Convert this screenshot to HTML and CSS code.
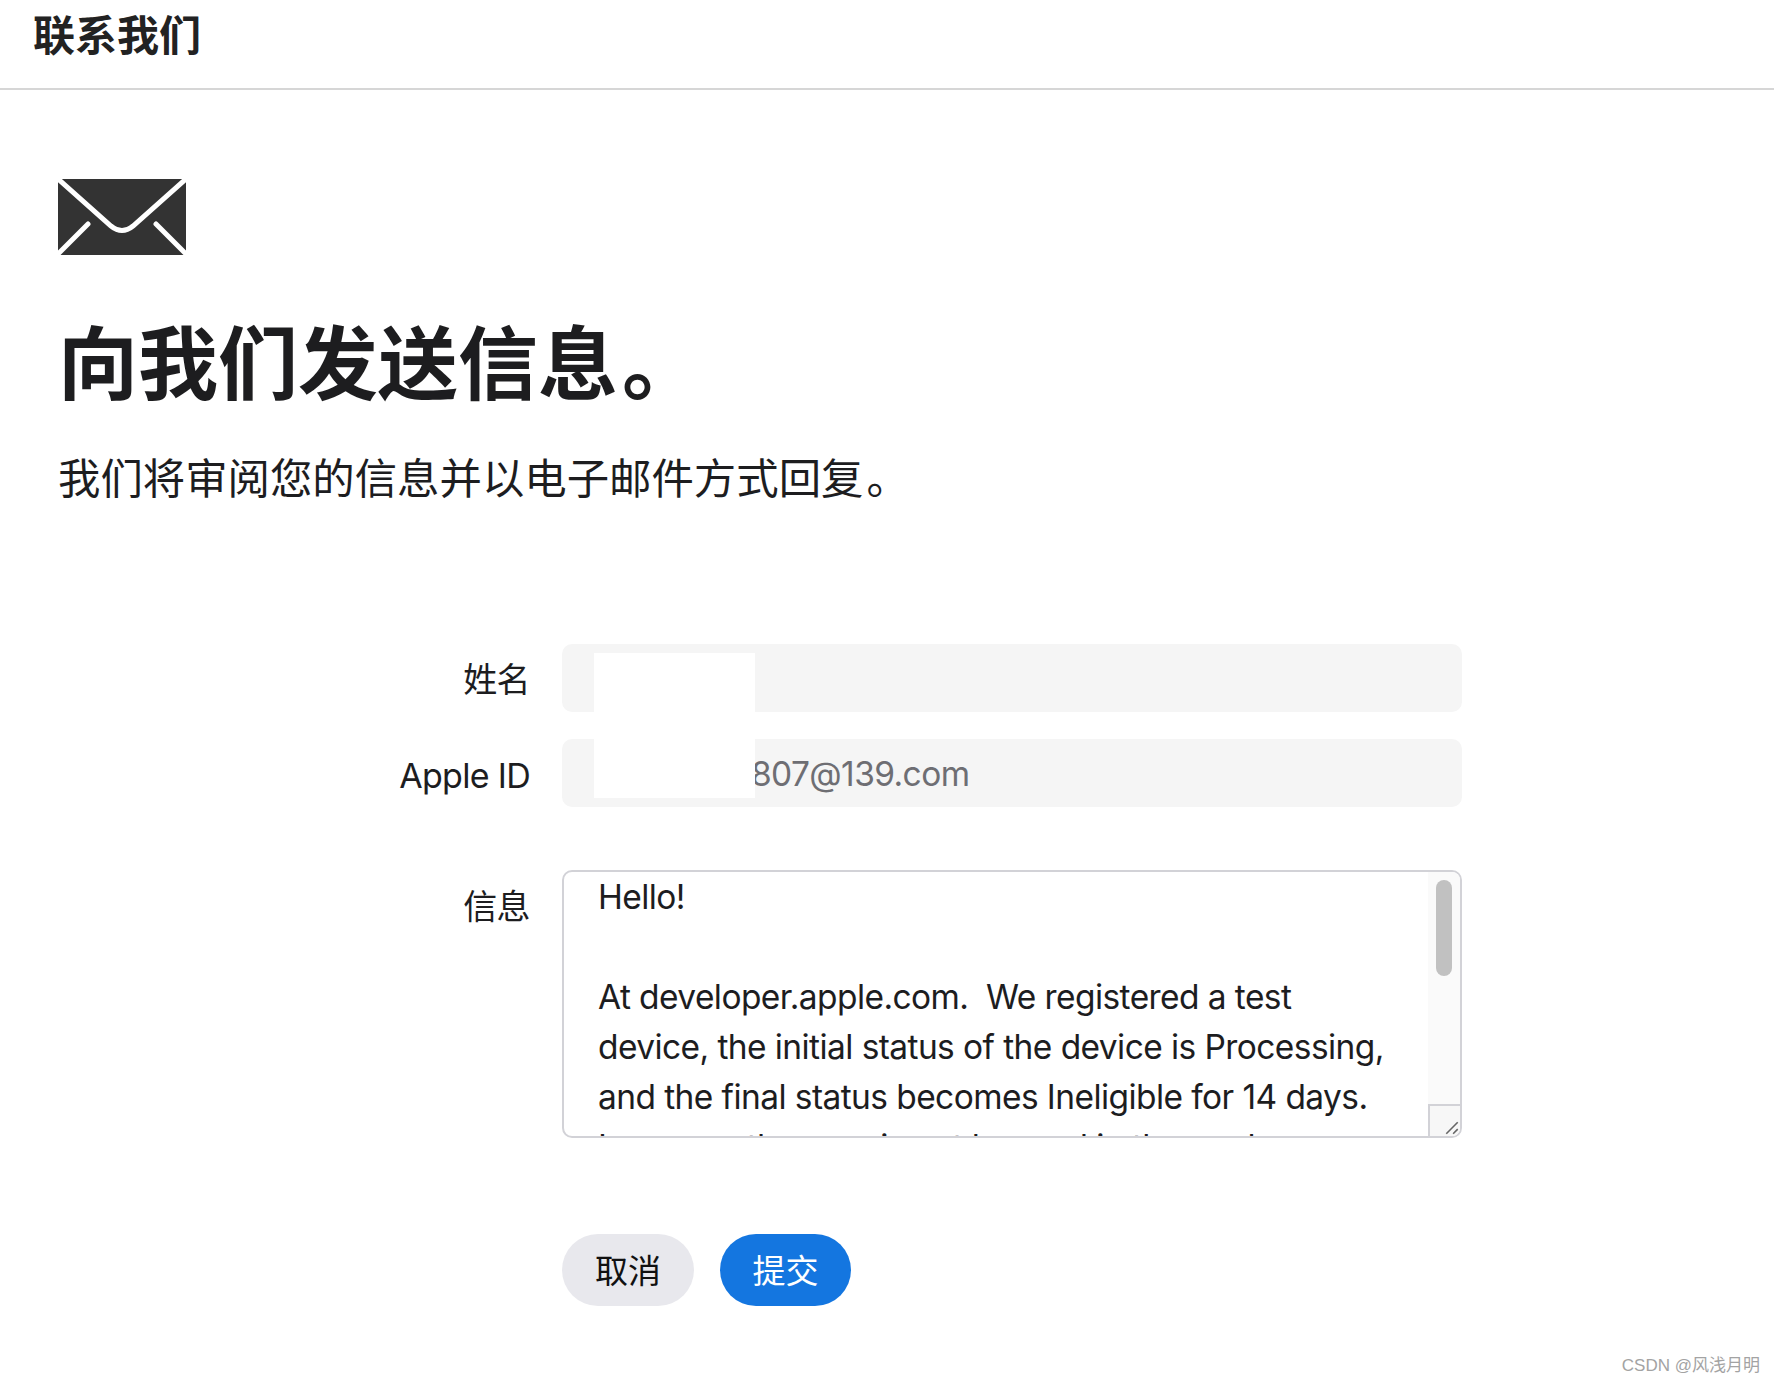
FILE: index.html
```html
<!DOCTYPE html>
<html lang="zh-CN">

<head>
  <meta charset="UTF-8">
  <meta name="viewport" content="width=device-width, initial-scale=1.0">
  <title>联系我们</title>
  <link rel="stylesheet" href="styles.css">
</head>

<body>
  <header class="topbar">
    <span class="topbar-title">联系我们</span>
  </header>

  <main class="content">
    <svg class="mail-icon" viewBox="0 0 128 76" aria-hidden="true">
      <path fill="#333" d="M0 0H128V76H0Z" />
      <path fill="none" stroke="#fff" stroke-width="5" stroke-linecap="round"
        d="M-1 -1L53 47Q64 56 75 47L129 -1M-1 76L30 45M129 76L98 45" />
    </svg>
    <h1 class="headline">向我们发送信息<span class="stop">。</span></h1>
    <p class="intro">我们将审阅您的信息并以电子邮件方式回复<span class="stop-small">。</span></p>

    <form class="form">
      <label class="label">姓名</label>
      <div class="field"></div>
      <label class="label label-id">Apple ID</label>
      <div class="field field-id">807@139.com</div>
      <div class="mask"></div>

      <label class="label label-msg">信息</label>
      <div class="message">
        <div class="message-text">Hello!<br><br>At developer.apple.com.&nbsp; We registered a test<br>device, the initial status of the device is Processing,<br>and the final status becomes Ineligible for 14 days.<br>I am sure the user is not banned in the apple</div>
        <div class="scroll-track"><div class="scroll-thumb"></div></div>
        <div class="resizer">
          <svg viewBox="0 0 14 14" aria-hidden="true">
            <path fill="none" stroke="#666" stroke-width="1.4" d="M2 12L12 2M8 12L12 8" />
          </svg>
        </div>
      </div>

      <div class="buttons">
        <button type="button" class="btn btn-cancel">取消</button>
        <button type="button" class="btn btn-submit">提交</button>
      </div>
    </form>
  </main>

  <div class="watermark">CSDN @风浅月明</div>
</body>

</html>
```

FILE: styles.css
```css
body {
  margin: 0;
  background: #fff;
  color: #1d1d1f;
  font-family: Inter, "Noto Sans CJK SC", sans-serif;
}

.topbar {
  height: 88px;
  padding-left: 33px;
  border-bottom: 2px solid #d6d6d6;
  display: flex;
  align-items: center;
}

.topbar-title {
  font-size: 42px;
  font-weight: 700;
  line-height: 72px;
  color: #222;
  position: relative;
  top: -8px;
}

.content {
  padding: 89px 0 0 58px;
}

.mail-icon {
  display: block;
  width: 128px;
  height: 76px;
}

.headline {
  margin: 53px 0 0;
  font-size: 80px;
  line-height: 112px;
  font-weight: 700;
}

.stop {
  margin-left: 4px;
}

.intro {
  margin: 29px 0 0;
  font-size: 42.4px;
  line-height: 60px;
}

.stop-small {
  margin-left: 3px;
}

.form {
  margin: 135px 0 0 -58px;
  display: grid;
  grid-template-columns: 530px 900px;
  column-gap: 32px;
  position: relative;
}

.label {
  padding-top: 2px;
  text-align: right;
  font-size: 34px;
  letter-spacing: -0.6px;
  line-height: 67px;
}

.label-id {
  padding-top: 3px;
  letter-spacing: -0.7px;
}

.field {
  height: 68px;
  margin-bottom: 27px;
  padding-left: 189px;
  border-radius: 10px;
  background: #f5f5f5;
  color: #6e6e73;
  font-size: 33.5px;
  letter-spacing: -0.6px;
  line-height: 71px;
}

.field-id {
  margin-bottom: 0;
}

.mask {
  position: absolute;
  left: 594px;
  top: 9px;
  width: 161px;
  height: 145px;
  background: #fff;
}

.label-msg {
  margin-top: 62px;
}

.message {
  margin-top: 61px;
  height: 264px;
  border: 2px solid #d2d2d7;
  border-radius: 10px;
  position: relative;
  overflow: hidden;
}

.message-text {
  padding: 0 34px;
  font-size: 33.5px;
  letter-spacing: -0.58px;
  line-height: 50px;
  white-space: nowrap;
}

.scroll-track {
  position: absolute;
  top: 0;
  right: 0;
  bottom: 0;
  width: 32px;
  background: #fafafa;
}

.scroll-thumb {
  position: absolute;
  top: 8px;
  right: 8px;
  width: 16px;
  height: 96px;
  border-radius: 8px;
  background: #c1c1c1;
}

.resizer {
  position: absolute;
  right: 0;
  bottom: 0;
  width: 30px;
  height: 30px;
  border: solid #d2d2d7;
  border-width: 2px 0 0 2px;
  background: #f7f7f7;
}

.resizer svg {
  position: absolute;
  right: 0;
  bottom: 0;
  width: 16px;
  height: 16px;
}

.buttons {
  grid-column: 2;
  margin-top: 96px;
  display: flex;
  gap: 26px;
}

.btn {
  width: 132px;
  height: 72px;
  padding: 0 0 3px;
  border: 0;
  border-radius: 36px;
  font-family: inherit;
  font-size: 33px;
}

.btn-cancel {
  background: #e8e8ed;
  color: #111;
}

.btn-submit {
  width: 131px;
  background: #1476e0;
  color: #fff;
}

.watermark {
  position: absolute;
  right: 14px;
  top: 1356px;
  font-family: "Liberation Sans", "Noto Sans CJK SC", sans-serif;
  font-size: 17px;
  line-height: 20px;
  color: #a3a3a3;
}
```
